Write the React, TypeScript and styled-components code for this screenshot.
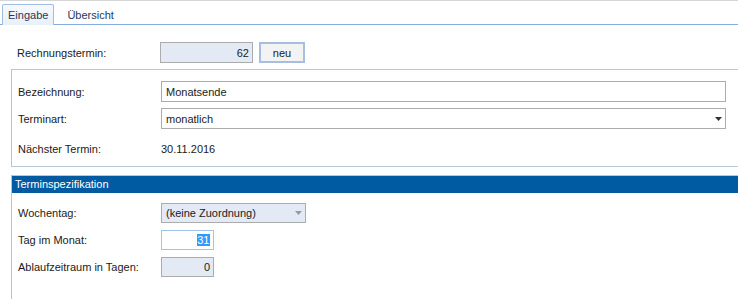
import React from "react";
import styled, { createGlobalStyle } from "styled-components";

const GlobalStyle = createGlobalStyle`
  html, body {
    margin: 0;
    padding: 0;
    background: #ffffff;
  }
  body {
    font-family: "Liberation Sans", Arial, sans-serif;
    font-size: 11px;
    color: #000000;
  }
`;

const Page = styled.div`
  width: 738px;
  height: 299px;
  overflow: hidden;
  border-top: 1px solid #d6d6d6;
  box-sizing: border-box;
`;

const TabStrip = styled.div`
  display: flex;
  align-items: flex-end;
  height: 23px;
  padding-left: 2px;
  border-bottom: 1px solid #84aee0;
`;

const Tab = styled.div<{ $active?: boolean }>`
  height: ${(p) => (p.$active ? "21px" : "19px")};
  padding: 0 5px;
  margin-left: ${(p) => (p.$active ? "0" : "7px")};
  display: flex;
  align-items: center;
  color: #1e395b;
  box-sizing: border-box;
  border: 1px solid ${(p) => (p.$active ? "#9fbde3" : "transparent")};
  border-bottom: none;
  border-radius: 2px 2px 0 0;
  background: ${(p) => (p.$active ? "linear-gradient(#f6f9fd, #e9f0f9)" : "transparent")};
  margin-bottom: ${(p) => (p.$active ? "-1px" : "0")};
  position: relative;
`;

const Body = styled.div`
  padding-left: 11px;
`;

const TopRow = styled.div`
  display: flex;
  align-items: center;
  padding: 17px 0 0 6px;
`;

const Label = styled.div`
  width: 143px;
  flex: none;
  color: #1a1a1a;
`;

const Field = styled.div<{ $w?: string; $h?: string; $bg?: string; $border?: string; $align?: string }>`
  width: ${(p) => p.$w || "93px"};
  height: ${(p) => p.$h || "21px"};
  box-sizing: border-box;
  border: 1px solid ${(p) => p.$border || "#acacac"};
  background: ${(p) => p.$bg || "#e3eaf6"};
  display: flex;
  align-items: center;
  justify-content: ${(p) => (p.$align === "right" ? "flex-end" : "space-between")};
  padding: 0 3px 0 4px;
  flex: none;
  color: #1a1a1a;
`;

const Button = styled.div`
  width: 46px;
  height: 21px;
  margin-left: 6px;
  box-sizing: border-box;
  border: 2px solid #a8bedf;
  background: #f3f3f3;
  display: flex;
  align-items: center;
  justify-content: center;
  color: #1a1a1a;
`;

const GroupBox = styled.div`
  margin-top: 6px;
  border-top: 1px solid #b8c6d4;
  border-left: 1px solid #b8c6d4;
  border-bottom: 1px solid #b4c8d8;
  padding: 11px 0 0 6px;
  display: flex;
  flex-direction: column;
  gap: 6px;
  height: 98px;
  box-sizing: border-box;
`;

const Row = styled.div<{ $h?: string; $offset?: string }>`
  display: flex;
  align-items: center;
  height: ${(p) => p.$h || "21px"};
  margin-top: ${(p) => p.$offset || "0"};
`;

const Value = styled.span`
  color: #1a1a1a;
`;

const Section = styled.div`
  margin-top: 8px;
  border-top: 1px solid #c4c4c4;
  border-left: 1px solid #c4c4c4;
  height: 130px;
`;

const SectionHeader = styled.div`
  background: #005ba3;
  color: #ffffff;
  height: 17px;
  line-height: 17px;
  padding-left: 3px;
`;

const SectionBody = styled.div`
  padding: 10px 0 0 6px;
  display: flex;
  flex-direction: column;
  gap: 7px;
`;

const Selected = styled.span`
  background: #3399ff;
  color: #ffffff;
  padding: 0 0.5px;
`;

const Arrow = ({ color }: { color: string }) => (
  <svg width="7" height="4" viewBox="0 0 7 4">
    <path d="M0 0h7L3.5 4z" fill={color} />
  </svg>
);

export default function App() {
  return (
    <>
      <GlobalStyle />
      <Page>
        <TabStrip>
          <Tab $active>Eingabe</Tab>
          <Tab>Übersicht</Tab>
        </TabStrip>
        <Body>
          <TopRow>
            <Label>Rechnungstermin:</Label>
            <Field $w="93px" $align="right">62</Field>
            <Button>neu</Button>
          </TopRow>
          <GroupBox>
            <Row>
              <Label>Bezeichnung:</Label>
              <Field $w="565px" $bg="#ffffff">Monatsende</Field>
            </Row>
            <Row>
              <Label>Terminart:</Label>
              <Field $w="565px" $bg="#ffffff">
                <span>monatlich</span>
                <Arrow color="#333333" />
              </Field>
            </Row>
            <Row $offset="3px">
              <Label>Nächster Termin:</Label>
              <Value>30.11.2016</Value>
            </Row>
          </GroupBox>
          <Section>
            <SectionHeader>Terminspezifikation</SectionHeader>
            <SectionBody>
              <Row $h="20px">
                <Label>Wochentag:</Label>
                <Field $w="145px" $h="20px">
                  <span>(keine Zuordnung)</span>
                  <Arrow color="#9a9a9a" />
                </Field>
              </Row>
              <Row $h="20px">
                <Label>Tag im Monat:</Label>
                <Field $w="53px" $h="20px" $bg="#ffffff" $border="#a4c3ea" $align="right">
                  <Selected>31</Selected>
                </Field>
              </Row>
              <Row $h="20px">
                <Label>Ablaufzeitraum in Tagen:</Label>
                <Field $w="53px" $h="20px" $align="right">0</Field>
              </Row>
            </SectionBody>
          </Section>
        </Body>
      </Page>
    </>
  );
}
